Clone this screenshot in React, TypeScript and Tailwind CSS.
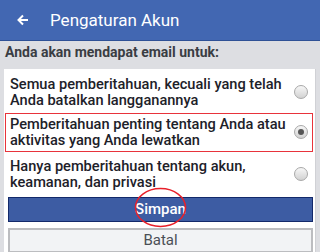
import React from "react";

function Radio({ checked }: { checked?: boolean }) {
  return (
    <div className="w-[14px] h-[14px] rounded-full border border-[#a8a8a8] bg-gradient-to-b from-[#f7f7f7] to-[#d2d2d2] flex items-center justify-center shrink-0">
      {checked && <div className="w-[6px] h-[6px] rounded-full bg-[#555]" />}
    </div>
  );
}

export default function App() {
  return (
    <div
      className="relative w-[320px] h-[252px] overflow-hidden bg-[#dddee2]"
      style={{ fontFamily: "Roboto, 'Liberation Sans', sans-serif" }}
    >
      <div className="h-[41px] bg-[#4267b2] border-b border-[#2f5196] flex items-center">
        <svg width="12" height="12" viewBox="0 0 12 12" className="ml-[17px]">
          <path d="M11 6H1.5M6 1.5L1.5 6L6 10.5" stroke="white" strokeWidth="2" fill="none" />
        </svg>
        <span className="ml-[21px] text-white text-[17px] leading-none">Pengaturan Akun</span>
      </div>
      <div className="pt-[1px] pb-[7px] pl-[5px] text-[14px] leading-[20px] font-bold text-[#3a3d43]">
        Anda akan mendapat email untuk:
      </div>
      <div className="ml-[4px] w-[312px] bg-white border-r border-[#d0d1d5] pb-[10px]">
        <div className="flex items-center pl-[6px] pr-[7px] pt-[7px] pb-[5px]">
          <div className="flex-1 text-[14.6px] leading-[16px] font-medium text-[#1d2129]">
            Semua pemberitahuan, kecuali yang telah<br />Anda batalkan langganannya
          </div>
          <Radio />
        </div>
        <div className="ml-[1px] mr-[2px] border border-[#e8333b] flex items-center pl-[4px] pr-[4px] pt-[2px] pb-[3px]">
          <div className="flex-1 text-[14.6px] leading-[16px] font-medium text-[#1d2129]">
            Pemberitahuan penting tentang Anda atau<br />aktivitas yang Anda lewatkan
          </div>
          <Radio checked />
        </div>
        <div className="flex items-center pl-[6px] pr-[7px] pt-[6px] pb-[7px]">
          <div className="flex-1 text-[14.6px] leading-[16px] font-medium text-[#1d2129]">
            Hanya pemberitahuan tentang akun,<br />keamanan, dan privasi
          </div>
          <Radio />
        </div>
        <div className="ml-[4px] mr-[2px] h-[25px] bg-[#3d5ca3] border border-[#13296a] flex items-center justify-center text-white text-[15px] font-medium">
          Simpan
        </div>
        <div className="ml-[4px] mr-[2px] mt-[6px] h-[25px] bg-[#f2f3f5] border-2 border-[#bcbdc0] flex items-center justify-center text-[#4b4f56] text-[15px]">
          Batal
        </div>
      </div>
      <svg className="absolute left-0 top-0 pointer-events-none" width="320" height="252">
        <ellipse cx="160.5" cy="207.5" rx="25" ry="19" fill="none" stroke="#e8202a" strokeWidth="1.5" />
      </svg>
    </div>
  );
}
